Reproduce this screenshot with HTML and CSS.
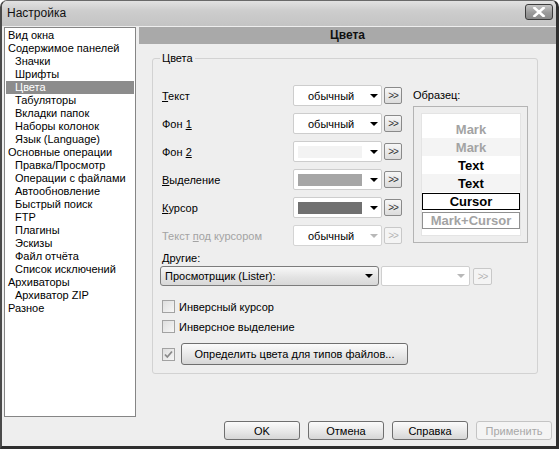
FILE: index.html
```html
<!DOCTYPE html>
<html>
<head>
<meta charset="utf-8">
<title>Настройка</title>
<link rel="stylesheet" href="styles.css">
</head>
<body>
<div class="window">
  <div class="titlebar">
    <span class="title">Настройка</span>
    <span class="close"><svg width="14" height="10" viewBox="0 0 14 10"><path d="M2.5 1 L11.5 9 M11.5 1 L2.5 9" stroke="#fff" stroke-width="2.6" stroke-linecap="square"/></svg></span>
  </div>
  <div class="main">
    <ul class="tree">
      <li>Вид окна</li>
      <li>Содержимое панелей</li>
      <li class="sub">Значки</li>
      <li class="sub">Шрифты</li>
      <li class="sub sel">Цвета</li>
      <li class="sub">Табуляторы</li>
      <li class="sub">Вкладки папок</li>
      <li class="sub">Наборы колонок</li>
      <li class="sub">Язык (Language)</li>
      <li>Основные операции</li>
      <li class="sub">Правка/Просмотр</li>
      <li class="sub">Операции с файлами</li>
      <li class="sub">Автообновление</li>
      <li class="sub">Быстрый поиск</li>
      <li class="sub">FTP</li>
      <li class="sub">Плагины</li>
      <li class="sub">Эскизы</li>
      <li class="sub">Файл отчёта</li>
      <li class="sub">Список исключений</li>
      <li>Архиваторы</li>
      <li class="sub">Архиватор ZIP</li>
      <li>Разное</li>
    </ul>
    <div class="panel">
      <div class="panel-head">Цвета</div>
      <div class="group">
        <span class="legend">Цвета</span>
        <div class="top">
          <div class="rows">
            <div class="row">
              <span class="lbl"><u>Т</u>екст</span>
              <span class="combo"><span class="val">обычный</span><span class="arrow"></span></span>
              <span class="more">&gt;&gt;</span>
            </div>
            <div class="row">
              <span class="lbl">Фон <u>1</u></span>
              <span class="combo"><span class="val">обычный</span><span class="arrow"></span></span>
              <span class="more">&gt;&gt;</span>
            </div>
            <div class="row">
              <span class="lbl">Фон <u>2</u></span>
              <span class="combo"><span class="swatch sw-bg2"></span><span class="arrow"></span></span>
              <span class="more">&gt;&gt;</span>
            </div>
            <div class="row">
              <span class="lbl"><u>В</u>ыделение</span>
              <span class="combo"><span class="swatch sw-sel"></span><span class="arrow"></span></span>
              <span class="more">&gt;&gt;</span>
            </div>
            <div class="row">
              <span class="lbl"><u>К</u>урсор</span>
              <span class="combo"><span class="swatch sw-cur"></span><span class="arrow"></span></span>
              <span class="more">&gt;&gt;</span>
            </div>
            <div class="row disabled">
              <span class="lbl">Текст <u>п</u>од курсором</span>
              <span class="combo"><span class="val">обычный</span><span class="arrow"></span></span>
              <span class="more">&gt;&gt;</span>
            </div>
          </div>
          <div class="sample">
            <div class="sample-lbl">Образец:</div>
            <div class="sample-box">
              <div class="sample-inner">
                <div class="s-row s-mark">Mark</div>
                <div class="s-row s-mark s-alt">Mark</div>
                <div class="s-row">Text</div>
                <div class="s-row s-alt">Text</div>
                <div class="s-cursor">Cursor</div>
                <div class="s-markcur">Mark+Cursor</div>
              </div>
            </div>
          </div>
        </div>
        <div class="other-lbl"><u>Д</u>ругие:</div>
        <div class="other-row">
          <span class="lister"><span class="val">Просмотрщик (Lister):</span><span class="arrow"></span></span>
          <span class="combo2"><span class="arrow"></span></span>
          <span class="more more-dis">&gt;&gt;</span>
        </div>
        <div class="check-row first">
          <span class="box"></span><span class="check-lbl">Инверсный курсор</span>
        </div>
        <div class="check-row">
          <span class="box"></span><span class="check-lbl">Инверсное выделение</span>
        </div>
        <div class="check-row last">
          <span class="box"><svg width="11" height="11" viewBox="0 0 11 11"><path d="M2 5.5 L4.3 8 L9 2.5" fill="none" stroke="#8a8a8a" stroke-width="1.8"/></svg></span>
          <span class="btn wide">Определить цвета для типов файлов...</span>
        </div>
      </div>
    </div>
  </div>
  <div class="footer">
    <span class="btn">OK</span>
    <span class="btn">Отмена</span>
    <span class="btn">Справка</span>
    <span class="btn btn-dis">Применить</span>
  </div>
</div>
</body>
</html>
```

FILE: styles.css
```css
html, body {
  margin: 0;
  padding: 0;
  background: #ffffff;
}
body {
  font-family: "Liberation Sans", Arial, sans-serif;
  font-size: 11px;
  color: #000;
}
u { text-decoration: underline; text-underline-offset: 1px; }

.window {
  width: 559px;
  height: 449px;
  box-sizing: border-box;
  background: #eeeeee;
  border-top: 1px solid #6a6a6a;
  border-left: 2px solid #4a4a4a;
  border-right: 3px solid #2e2e2e;
  border-bottom: 3px solid #2e2e2e;
  border-radius: 7px 7px 0 0;
  display: flex;
  flex-direction: column;
  overflow: hidden;
}

.titlebar {
  height: 25px;
  flex: none;
  display: flex;
  align-items: center;
  justify-content: space-between;
  background: linear-gradient(#e2e2e2, #cdcdcd 40%, #c4c4c4);
  padding: 0 3px 0 5px;
}
.title {
  font-size: 12px;
  color: #111;
  margin-top: -1px;
}
.close {
  width: 28px;
  height: 16px;
  box-sizing: border-box;
  border: 1px solid #3c3c3c;
  border-radius: 3px;
  background: linear-gradient(#c4c4c4, #9a9a9a 55%, #8a8a8a);
  display: flex;
  align-items: center;
  justify-content: center;
  margin-top: -4px;
}

.main {
  height: 390px;
  margin-top: 1px;
  margin-left: 2px;
  display: flex;
  gap: 3px;
  flex: none;
}

.tree {
  list-style: none;
  margin: 0;
  padding: 1px 0 0 0;
  width: 132px;
  box-sizing: border-box;
  background: #fff;
  border: 1px solid #858585;
  flex: none;
}
.tree li {
  height: 13px;
  line-height: 13px;
  padding-left: 3px;
  white-space: nowrap;
}
.tree li.sub { padding-left: 10px; }
.tree li.sel {
  background: #8c8c8c;
  color: #fff;
  margin: 0 1px;
  padding-left: 9px;
}

.panel {
  flex: 1;
  display: flex;
  flex-direction: column;
}
.panel-head {
  height: 17px;
  line-height: 17px;
  background: #a9a9a9;
  text-align: center;
  font-weight: bold;
  font-size: 12px;
  color: #111;
}

.group {
  position: relative;
  margin: 14px 18px 0 13px;
  height: 316px;
  box-sizing: border-box;
  border: 1px solid #d2d2d2;
  border-radius: 3px;
  padding: 26px 0 0 9px;
}
.legend {
  position: absolute;
  top: -7px;
  left: 7px;
  padding: 0 2px;
  background: #eeeeee;
  line-height: 13px;
}

.top {
  display: flex;
}
.rows {
  display: flex;
  flex-direction: column;
  gap: 7px;
}
.row {
  display: flex;
  align-items: center;
  height: 21px;
}
.lbl {
  width: 131px;
  flex: none;
}
.combo {
  width: 89px;
  height: 21px;
  box-sizing: border-box;
  border: 1px solid #cdcdcd;
  border-radius: 2px;
  background: #fff;
  display: flex;
  align-items: center;
  padding-left: 14px;
  padding-right: 3px;
}
.combo .val { flex: 1; }
.arrow {
  width: 0;
  height: 0;
  border-left: 4px solid transparent;
  border-right: 4px solid transparent;
  border-top: 4px solid #000;
  margin-left: auto;
}
.swatch {
  width: 64px;
  height: 12px;
  margin-left: -10px;
}
.sw-bg2 { background: #f3f3f3; }
.sw-sel { background: #a6a6a6; }
.sw-cur { background: #707070; }

.more {
  width: 18px;
  height: 17px;
  box-sizing: border-box;
  margin-left: 2px;
  border: 1px solid #8a8a8a;
  border-radius: 2px;
  background: linear-gradient(#f7f7f7, #dcdcdc);
  font-size: 10px;
  line-height: 15px;
  text-align: center;
  color: #333;
  letter-spacing: -1px;
  flex: none;
}
.row.disabled .lbl { color: #a3a3a3; }
.row.disabled .combo { border-color: #d4d4d4; }
.row.disabled .arrow { border-top-color: #b8b8b8; }
.row.disabled .more, .more-dis {
  border-color: #c8c8c8;
  background: #f4f4f4;
  color: #b4b4b4;
}

.sample {
  margin-left: 11px;
}
.sample-lbl {
  height: 21px;
  line-height: 21px;
}
.sample-box {
  width: 115px;
  height: 137px;
  box-sizing: border-box;
  border: 1px solid #b4b4b4;
  padding: 6px 6px 6px 7px;
}
.sample-inner {
  height: 123px;
  background: #fff;
  border: 1px solid #e4e4e4;
  box-sizing: border-box;
  padding-top: 6px;
  font-size: 13px;
  font-weight: bold;
  text-align: center;
}
.s-row {
  height: 18px;
  line-height: 19px;
}
.s-alt { background: #f4f4f4; }
.s-mark { color: #a3a3a3; }
.s-cursor {
  margin: 1px 0 0 0;
  height: 17px;
  line-height: 15px;
  box-sizing: border-box;
  border: 1px solid #000;
}
.s-markcur {
  margin: 2px 0 0 0;
  height: 17px;
  line-height: 15px;
  box-sizing: border-box;
  border: 1px solid #909090;
  color: #a3a3a3;
}

.other-lbl {
  margin-top: 6px;
  line-height: 13px;
}
.other-row {
  margin-top: 1px;
  margin-left: -2px;
  display: flex;
  align-items: center;
}
.lister {
  width: 219px;
  height: 20px;
  box-sizing: border-box;
  border: 1px solid #7c7c7c;
  border-radius: 3px;
  background: linear-gradient(#f8f8f8, #e2e2e2 60%, #d8d8d8);
  display: flex;
  align-items: center;
  padding: 0 5px 0 4px;
}
.combo2 {
  width: 89px;
  height: 20px;
  margin-left: 2px;
  box-sizing: border-box;
  border: 1px solid #cfcfcf;
  border-radius: 2px;
  background: #fff;
  display: flex;
  align-items: center;
  padding-right: 4px;
}
.combo2 .arrow { border-top-color: #b8b8b8; }
.other-row .more { margin-left: 3px; width: 19px; }

.check-row {
  display: flex;
  align-items: center;
  height: 13px;
  margin-top: 7px;
}
.check-row.first { margin-top: 14px; }
.check-row.last { margin-top: 10px; height: 22px; }
.box {
  width: 13px;
  height: 13px;
  box-sizing: border-box;
  border: 1px solid #a2a2a2;
  background: linear-gradient(135deg, #dedede, #f6f6f6);
  display: flex;
  align-items: center;
  justify-content: center;
  flex: none;
}
.check-lbl { margin-left: 4px; }

.btn {
  height: 19px;
  width: 76px;
  box-sizing: border-box;
  border: 1px solid #6f6f6f;
  border-radius: 3px;
  background: linear-gradient(#fbfbfb, #e6e6e6 60%, #d6d6d6);
  display: flex;
  align-items: center;
  justify-content: center;
  flex: none;
}
.btn.wide {
  width: 227px;
  height: 22px;
  margin-left: 6px;
}
.btn-dis {
  border-color: #c4c4c4;
  background: #f4f4f4;
  color: #a8a8a8;
}

.footer {
  display: flex;
  justify-content: flex-end;
  gap: 8px;
  padding: 4px 4px 0 0;
}
```
